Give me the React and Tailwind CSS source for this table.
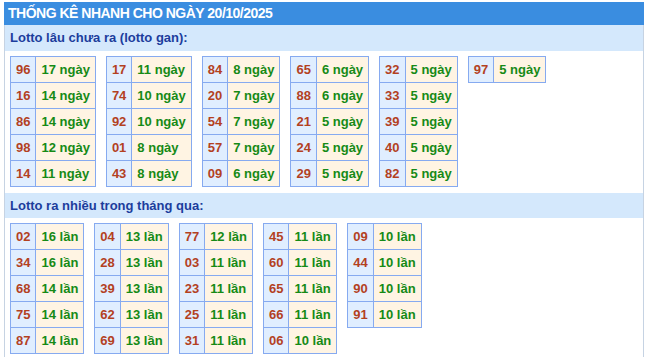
import React from "react";

const gan = [
  [["96", "17 ngày"], ["16", "14 ngày"], ["86", "14 ngày"], ["98", "12 ngày"], ["14", "11 ngày"]],
  [["17", "11 ngày"], ["74", "10 ngày"], ["92", "10 ngày"], ["01", "8 ngày"], ["43", "8 ngày"]],
  [["84", "8 ngày"], ["20", "7 ngày"], ["54", "7 ngày"], ["57", "7 ngày"], ["09", "6 ngày"]],
  [["65", "6 ngày"], ["88", "6 ngày"], ["21", "5 ngày"], ["24", "5 ngày"], ["29", "5 ngày"]],
  [["32", "5 ngày"], ["33", "5 ngày"], ["39", "5 ngày"], ["40", "5 ngày"], ["82", "5 ngày"]],
  [["97", "5 ngày"]],
];

const nhieu = [
  [["02", "16 lần"], ["34", "16 lần"], ["68", "14 lần"], ["75", "14 lần"], ["87", "14 lần"]],
  [["04", "13 lần"], ["28", "13 lần"], ["39", "13 lần"], ["62", "13 lần"], ["69", "13 lần"]],
  [["77", "12 lần"], ["03", "11 lần"], ["23", "11 lần"], ["25", "11 lần"], ["31", "11 lần"]],
  [["45", "11 lần"], ["60", "11 lần"], ["65", "11 lần"], ["66", "11 lần"], ["06", "10 lần"]],
  [["09", "10 lần"], ["44", "10 lần"], ["90", "10 lần"], ["91", "10 lần"]],
];

function Tbl({ rows }) {
  return (
    <table className="border-collapse self-start">
      <tbody>
        {rows.map(([n, v], i) => (
          <tr key={i}>
            <td className="border border-[#86aaf0] bg-[#e0eeff] px-[5px] py-[5px] leading-[15px] text-[#b3411f] text-center">
              {n}
            </td>
            <td className="border border-[#86aaf0] bg-[#fff4e3] px-[5px] py-[5px] leading-[15px] text-[#168a16] whitespace-nowrap">
              {v}
            </td>
          </tr>
        ))}
      </tbody>
    </table>
  );
}

export default function App() {
  return (
    <div className="w-[650px] h-[357px] overflow-hidden bg-white font-['Liberation_Sans',Arial,sans-serif] font-bold text-[13px]">
      <div className="ml-[4px] mt-[2px] w-[640px]">
        <div className="h-[23px] bg-[#3a8de0] text-white text-[14px] tracking-[-0.5px] leading-[23px] pl-[4px]">
          THỐNG KÊ NHANH CHO NGÀY 20/10/2025
        </div>
        <div className="border-x border-[#c6d3e3] h-[332px]">
          <div className="h-[26px] bg-[#d4e8fc] text-[#1c3d9c] leading-[26px] pl-[5px]">
            Lotto lâu chưa ra (lotto gan):
          </div>
          <div className="flex gap-[10px] pl-[5px] mt-[5px] mb-[6px]">
            {gan.map((t, i) => (
              <Tbl key={i} rows={t} />
            ))}
          </div>
          <div className="h-[25px] bg-[#d4e8fc] text-[#1c3d9c] leading-[25px] pl-[5px]">
            Lotto ra nhiều trong tháng qua:
          </div>
          <div className="flex gap-[10px] pl-[5px] mt-[5px]">
            {nhieu.map((t, i) => (
              <Tbl key={i} rows={t} />
            ))}
          </div>
        </div>
      </div>
    </div>
  );
}
